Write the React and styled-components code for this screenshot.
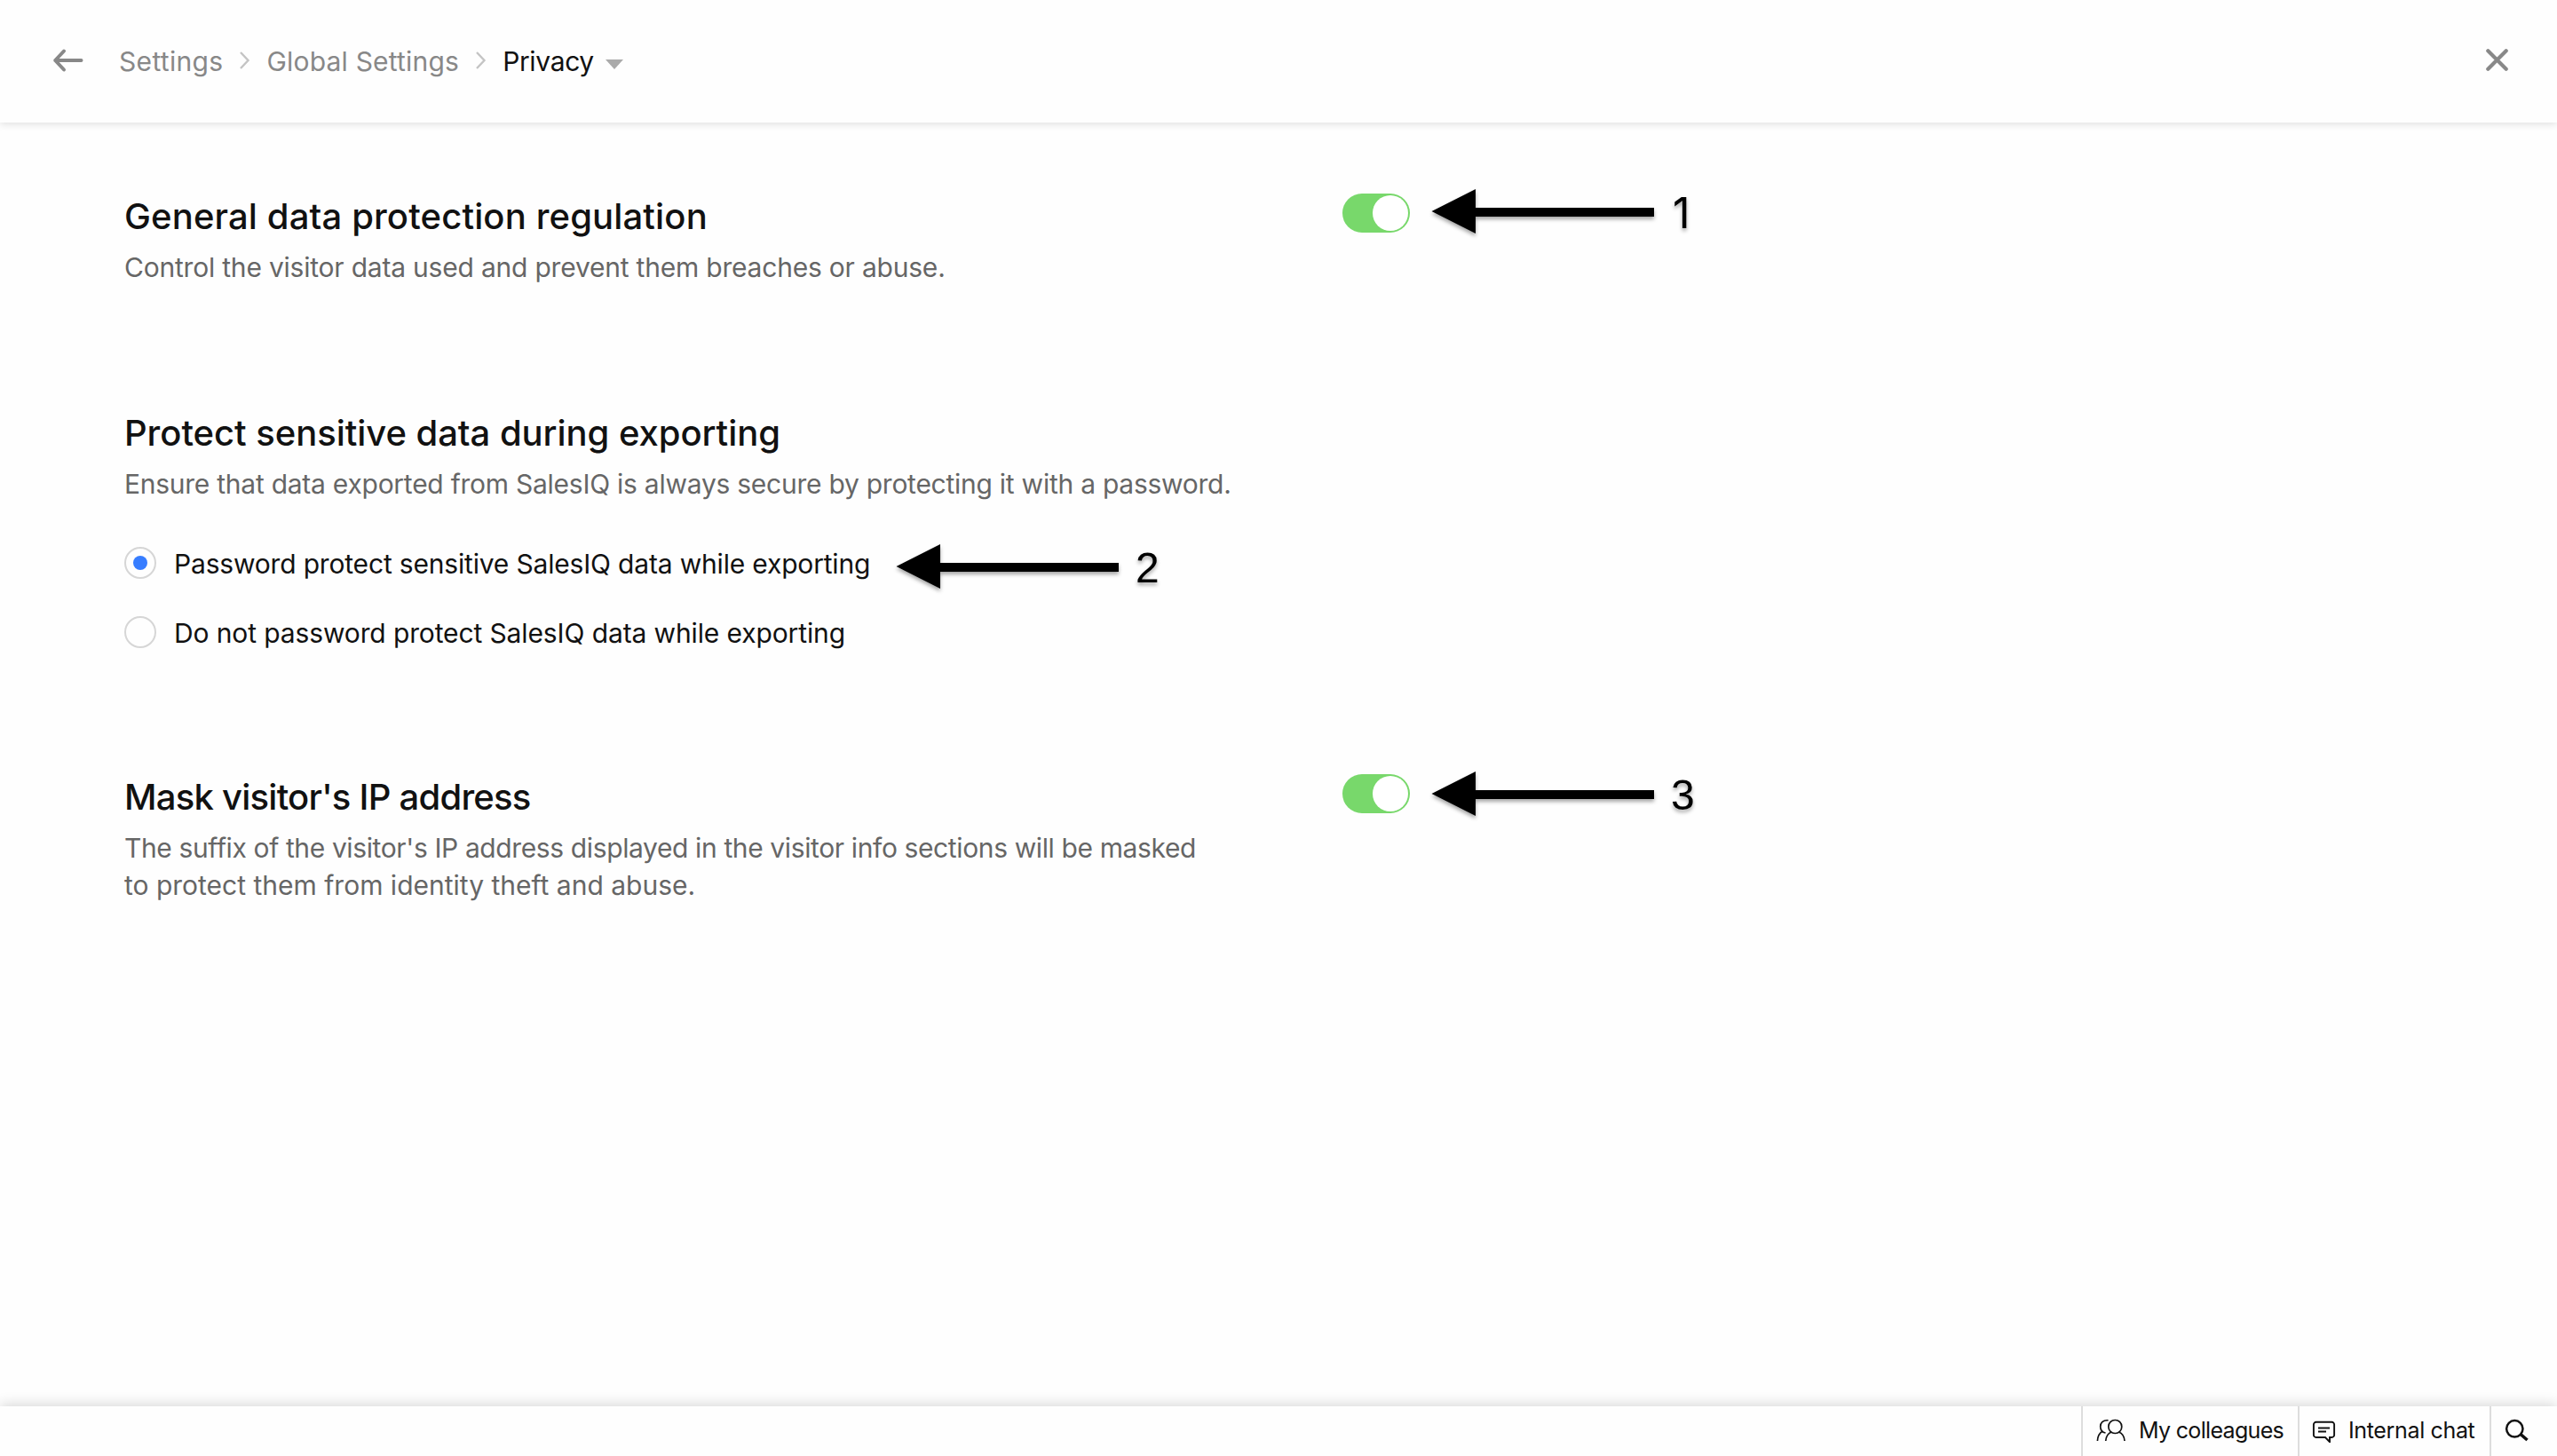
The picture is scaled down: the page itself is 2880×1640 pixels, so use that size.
import React, { useState } from 'react';
import styled, { createGlobalStyle } from 'styled-components';

const GlobalStyle = createGlobalStyle`
  * {
    box-sizing: border-box;
  }

  body {
    margin: 0;
    background-color: #fefefe;
    color: #111;
    font-family: Inter, 'Liberation Sans', sans-serif;
  }

  h2, p {
    margin: 0;
  }
`;

const Page = styled.div`
  display: flex;
  flex-direction: column;
  height: 1640px;
  overflow: hidden;
`;

const Header = styled.header`
  display: flex;
  align-items: center;
  justify-content: space-between;
  height: 138px;
  padding: 0 55px 0 59px;
  box-shadow: 0 2px 8px rgba(0, 0, 0, 0.12);
`;

const Breadcrumb = styled.nav`
  display: flex;
  align-items: center;
  font-size: 30px;
  line-height: 42px;

  svg {
    display: block;
    flex: none;
  }
`;

const Crumb = styled.span`
  color: ${(props) => (props.$current ? '#111' : '#888')};
  letter-spacing: ${(props) => props.$spacing}px;
`;

const BackIcon = styled.svg`
  margin: -2px 39px 0 0;
`;

const ChevronIcon = styled.svg`
  margin: -2px 18px 0 18px;
`;

const CaretIcon = styled.svg`
  margin: 6px 0 0 13px;
`;

const CloseIcon = styled.svg`
  display: block;
  margin-top: -3px;
`;

const Content = styled.main`
  flex: 1;
  padding: 80px 140px 0;
`;

const Section = styled.section`
  display: flex;
  align-items: flex-start;
  height: ${(props) => props.$height}px;
`;

const SectionText = styled.div`
  width: 1372px;
  padding-top: 1px;
`;

const Title = styled.h2`
  font-size: 40px;
  font-weight: 500;
  line-height: 50px;
  letter-spacing: ${(props) => props.$spacing || 0}px;
`;

const Description = styled.p`
  margin-top: 11px;
  color: #666;
  font-size: 30px;
  line-height: 42px;

  span {
    display: block;
    letter-spacing: ${(props) => props.$spacing || 0}px;
  }

  span + span {
    letter-spacing: 0;
  }
`;

const Switch = styled.button`
  display: flex;
  justify-content: ${(props) => (props.$on ? 'flex-end' : 'flex-start')};
  width: 76px;
  height: 44px;
  margin: 0 24px 0 0;
  padding: 2px;
  border: 0;
  border-radius: 22px;
  background-color: ${(props) => (props.$on ? '#78d86b' : '#ccc')};
`;

const Knob = styled.span`
  width: 40px;
  height: 40px;
  border-radius: 50%;
  background-color: #fff;
`;

const RadioGroup = styled.div`
  display: flex;
  flex-direction: column;
  gap: 42px;
  margin-top: 50px;
`;

const RadioRow = styled.div`
  display: flex;
  align-items: flex-start;
  height: 36px;
`;

const RadioCircle = styled.span`
  display: flex;
  align-items: center;
  justify-content: center;
  width: 36px;
  height: 36px;
  margin-right: 20px;
  border: 2px solid #d6d6d6;
  border-radius: 50%;

  &::after {
    content: '';
    width: 16px;
    height: 16px;
    border-radius: 50%;
    background-color: ${(props) => (props.$checked ? '#377dff' : 'transparent')};
  }
`;

const RadioLabel = styled.span`
  width: 813px;
  padding-top: 1px;
  font-size: 30px;
  line-height: 36px;
  letter-spacing: ${(props) => props.$spacing}px;
`;

const Pointer = styled.div`
  display: flex;
  gap: 19px;
  margin-top: ${(props) => props.$top}px;
  filter: drop-shadow(0 3px 2px rgba(0, 0, 0, 0.35));

  svg {
    display: block;
  }
`;

const Step = styled.span`
  padding: 2px 0 0 ${(props) => (props.$plain ? 2 : 0)}px;
  color: #000;
  font-family: ${(props) => (props.$plain ? 'Inter' : "'Liberation Sans'")}, sans-serif;
  font-size: 48px;
  line-height: 50px;
`;

const Footer = styled.footer`
  display: flex;
  justify-content: flex-end;
  height: 56px;
  box-shadow: 0 -2px 14px rgba(0, 0, 0, 0.16);
`;

const FooterItem = styled.div`
  display: flex;
  align-items: center;
  gap: 13px;
  width: ${(props) => props.$width}px;
  padding: 0 0 2px 14px;
  border-left: 2px solid #ddd;
  font-size: 25px;
  line-height: 30px;
  letter-spacing: ${(props) => props.$spacing || 0}px;
  white-space: nowrap;
`;

const Chevron = () => (
  <ChevronIcon width="13" height="20" viewBox="0 0 13 20" fill="none" stroke="#c4c4c4" strokeWidth="2.4">
    <path d="m2 1 8.500 9L2 19" />
  </ChevronIcon>
);

const Callout = ({ step, top }) => (
  <Pointer $top={top}>
    <svg width="251" height="50" viewBox="0 0 251 50">
      <path d="M.5 25 50 0v21h201v10H50v19z" fill="#000" />
    </svg>
    <Step $plain={step === 1}>{step}</Step>
  </Pointer>
);

const Toggle = () => {
  const [on, setOn] = useState(true);
  return (
    <Switch type="button" role="switch" aria-checked={on} $on={on} onClick={() => setOn(!on)}>
      <Knob />
    </Switch>
  );
};

const options = [
  { id: 'protect', label: 'Password protect sensitive SalesIQ data while exporting', spacing: -0.18, step: 2 },
  { id: 'none', label: 'Do not password protect SalesIQ data while exporting', spacing: -0.12 },
];

const ExportOptions = () => {
  const [selected, setSelected] = useState('protect');
  return (
    <RadioGroup role="radiogroup">
      {options.map((option) => (
        <RadioRow key={option.id} role="radio" aria-checked={selected === option.id} onClick={() => setSelected(option.id)}>
          <RadioCircle $checked={selected === option.id} />
          <RadioLabel $spacing={option.spacing}>{option.label}</RadioLabel>
          {option.step && <Callout step={option.step} top={-3} />}
        </RadioRow>
      ))}
    </RadioGroup>
  );
};

const App = () => (
  <Page>
    <GlobalStyle />

    <Header>
      <Breadcrumb>
        <BackIcon width="36" height="28" viewBox="0 0 36 28" fill="none" stroke="#888" strokeWidth="4" strokeLinecap="round" strokeLinejoin="round">
          <path d="M13 3.500 3.200 14 13 24.500M3.200 14h29.300" />
        </BackIcon>
        <Crumb $spacing={0.32}>Settings</Crumb>
        <Chevron />
        <Crumb $spacing={0.2}>Global Settings</Crumb>
        <Chevron />
        <Crumb $current $spacing={-0.35}>Privacy</Crumb>
        <CaretIcon width="20" height="11" viewBox="0 0 20 11">
          <path d="M0 0h20L10 11z" fill="#aaa" />
        </CaretIcon>
      </Breadcrumb>
      <CloseIcon width="25" height="25" viewBox="0 0 25 25" fill="none" stroke="#888" strokeWidth="4.200" strokeLinecap="round">
        <path d="m2.300 2.300 20.400 20.400m0-20.400L2.300 22.700" />
      </CloseIcon>
    </Header>

    <Content>
      <Section $height={244}>
        <SectionText>
          <Title $spacing={0.14}>General data protection regulation</Title>
          <Description $spacing={-0.21}>
            <span>Control the visitor data used and prevent them breaches or abuse.</span>
          </Description>
        </SectionText>
        <Toggle />
        <Callout step={1} top={-5} />
      </Section>

      <Section $height={410}>
        <SectionText>
          <Title $spacing={-0.05}>Protect sensitive data during exporting</Title>
          <Description $spacing={-0.255}>
            <span>Ensure that data exported from SalesIQ is always secure by protecting it with a password.</span>
          </Description>
          <ExportOptions />
        </SectionText>
      </Section>

      <Section $height={180}>
        <SectionText>
          <Title $spacing={-0.76}>Mask visitor's IP address</Title>
          <Description $spacing={-0.38}>
            <span>The suffix of the visitor's IP address displayed in the visitor info sections will be masked</span>
            <span>to protect them from identity theft and abuse.</span>
          </Description>
        </SectionText>
        <Toggle />
        <Callout step={3} top={-3} />
      </Section>
    </Content>

    <Footer>
      <FooterItem $width={244} $spacing={-0.68}>
        <svg width="36" height="28" viewBox="0 0 36 28" fill="none" stroke="#111" strokeWidth="1.7">
          <circle cx="22.300" cy="10" r="7.500" />
          <path d="M11.700 26c.4-5 2.600-8.500 6.600-10M33 26c-.4-5-2.600-8.500-6.600-10" />
          <path d="M14.500 2.800C8.500 2.300 5.600 6 5.700 10c.1 3.500 2 6.300 5.800 7" />
          <path d="M8.500 15C4.500 17 2.700 21 2.400 26" />
        </svg>
        My colleagues
      </FooterItem>
      <FooterItem $width={216} $spacing={-0.35}>
        <svg width="28" height="28" viewBox="0 0 28 28" fill="none" stroke="#111" strokeWidth="1.9">
          <path d="M4.700 4.800h17.600a2.800 2.800 0 0 1 2.800 2.800v11.600a2.800 2.800 0 0 1-2.800 2.800H20v5.200L15 22H4.700a2.800 2.800 0 0 1-2.800-2.800V7.600a2.800 2.800 0 0 1 2.800-2.800z" />
          <path d="M7 11.500h13M7 15.500h9" />
        </svg>
        Internal chat
      </FooterItem>
      <FooterItem $width={76}>
        <svg width="28" height="28" viewBox="0 0 28 28" fill="none" stroke="#111">
          <circle cx="12.300" cy="12.300" r="9.200" strokeWidth="2.500" />
          <path d="m19 18.500 7.500 6.500" strokeWidth="3.600" />
        </svg>
      </FooterItem>
    </Footer>
  </Page>
);

export default App;
